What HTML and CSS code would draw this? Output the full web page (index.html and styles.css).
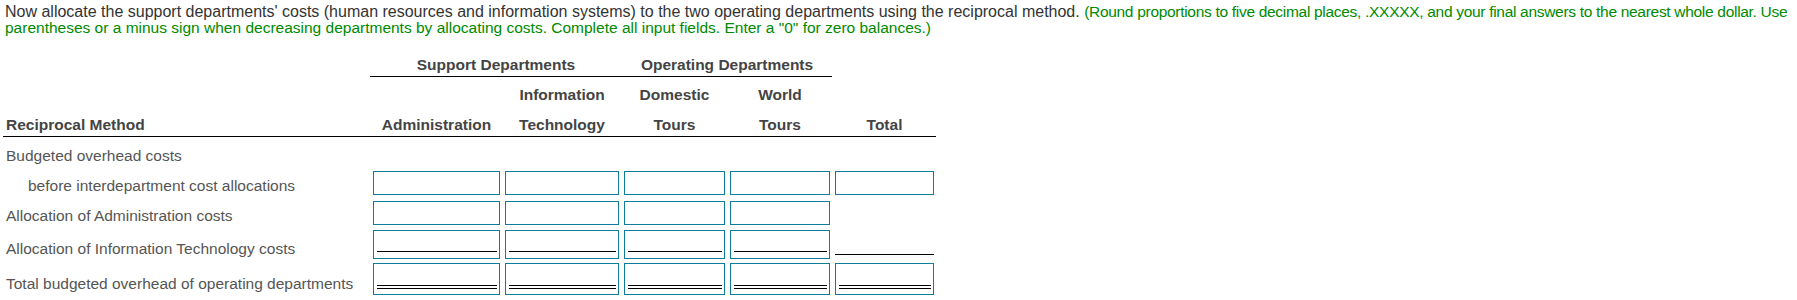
FILE: index.html
```html
<!DOCTYPE html>
<html lang="en">
<head>
<meta charset="utf-8">
<title>Reciprocal Method</title>
<link rel="stylesheet" href="styles.css">
</head>
<body>
<div class="page">
  <p class="intro">Now allocate the support departments' costs (human resources and information systems) to the two operating departments using the reciprocal method. <span class="hint tight">(Round proportions to five decimal places, .XXXXX, and your final answers to the nearest whole dollar. Use</span> <span class="hint">parentheses or a minus sign when decreasing departments by allocating costs. Complete all input fields. Enter a "0" for zero balances.)</span></p>

  <table class="alloc">
    <colgroup>
      <col class="c-label">
      <col class="c1">
      <col class="c2">
      <col class="c3">
      <col class="c4">
      <col class="c5">
    </colgroup>
    <thead>
      <tr class="h1">
        <th class="label"></th>
        <th class="group" colspan="2">Support Departments</th>
        <th class="group" colspan="2">Operating Departments</th>
        <th></th>
      </tr>
      <tr class="h2">
        <th class="label"></th>
        <th></th>
        <th>Information</th>
        <th>Domestic</th>
        <th>World</th>
        <th></th>
      </tr>
      <tr class="h3">
        <th class="label">Reciprocal Method</th>
        <th>Administration</th>
        <th>Technology</th>
        <th>Tours</th>
        <th>Tours</th>
        <th>Total</th>
      </tr>
    </thead>
    <tbody>
      <tr class="r-a">
        <td class="label">Budgeted overhead costs</td>
        <td></td><td></td><td></td><td></td><td></td>
      </tr>
      <tr class="r-b">
        <td class="label indent">before interdepartment cost allocations</td>
        <td><input class="amt" type="text" aria-label="Administration budgeted"></td>
        <td><input class="amt" type="text" aria-label="Information Technology budgeted"></td>
        <td><input class="amt" type="text" aria-label="Domestic Tours budgeted"></td>
        <td><input class="amt" type="text" aria-label="World Tours budgeted"></td>
        <td><input class="amt" type="text" aria-label="Total budgeted"></td>
      </tr>
      <tr class="r-c">
        <td class="label">Allocation of Administration costs</td>
        <td><input class="amt" type="text" aria-label="Administration allocation 1"></td>
        <td><input class="amt" type="text" aria-label="Information Technology allocation 1"></td>
        <td><input class="amt" type="text" aria-label="Domestic Tours allocation 1"></td>
        <td><input class="amt" type="text" aria-label="World Tours allocation 1"></td>
        <td></td>
      </tr>
      <tr class="r-d">
        <td class="label">Allocation of Information Technology costs</td>
        <td><input class="amt single" type="text" aria-label="Administration allocation 2"></td>
        <td><input class="amt single" type="text" aria-label="Information Technology allocation 2"></td>
        <td><input class="amt single" type="text" aria-label="Domestic Tours allocation 2"></td>
        <td><input class="amt single" type="text" aria-label="World Tours allocation 2"></td>
        <td><span class="rule"></span></td>
      </tr>
      <tr class="r-e">
        <td class="label">Total budgeted overhead of operating departments</td>
        <td><input class="amt double" type="text" aria-label="Administration total"></td>
        <td><input class="amt double" type="text" aria-label="Information Technology total"></td>
        <td><input class="amt double" type="text" aria-label="Domestic Tours total"></td>
        <td><input class="amt double" type="text" aria-label="World Tours total"></td>
        <td><input class="amt double" type="text" aria-label="Grand total"></td>
      </tr>
    </tbody>
  </table>
</div>
</body>
</html>
```

FILE: styles.css
```css
html, body {
  margin: 0;
  padding: 0;
  background: #ffffff;
}

body {
  font-family: "Liberation Sans", Arial, sans-serif;
  font-size: 15.5px;
  color: #333333;
}

.page {
  padding: 0 0 0 3px;
}

.intro {
  margin: 0;
  padding: 4px 0 0 2px;
  font-size: 16px;
  line-height: 16px;
  color: #333333;
}

.hint {
  color: #008a00;
  font-size: 15.5px;
}

.hint.tight {
  letter-spacing: -0.3px;
}

.alloc {
  margin-top: 10px;
  border-collapse: collapse;
  border-spacing: 0;
  table-layout: fixed;
  width: 933px;
}

.c-label { width: 367px; }
.c1 { width: 132px; }
.c2 { width: 119px; }
.c3 { width: 106px; }
.c4 { width: 105px; }
.c5 { width: 104px; }

.alloc th,
.alloc td {
  padding: 0 2px 0 3px;
  line-height: 16px;
  white-space: nowrap;
}

.alloc th {
  font-weight: bold;
  color: #444444;
  text-align: center;
  vertical-align: bottom;
  height: 30px;
  padding-bottom: 3px;
  box-sizing: border-box;
}

.alloc th.label {
  text-align: left;
}

.alloc th.group {
  border-bottom: 1px solid #000000;
}

.h3 th {
  border-bottom: 1px solid #000000;
}

.alloc td {
  vertical-align: top;
  color: #555555;
}

.alloc td.label {
  vertical-align: bottom;
  padding-bottom: 4px;
}

.alloc td.indent {
  padding-left: 25px;
}

.r-a td { height: 32px; box-sizing: border-box; }
.r-b td, .r-c td { padding-top: 3px; padding-bottom: 3px; }
.r-d td { padding-top: 2px; padding-bottom: 2px; }
.r-e td { padding-top: 2px; padding-bottom: 1px; }

.amt {
  display: block;
  box-sizing: border-box;
  width: 100%;
  height: 24px;
  margin: 0;
  padding: 0 4px;
  border: 1px solid #0f7c9a;
  border-radius: 0;
  background-color: #ffffff;
  font: inherit;
  outline: none;
}

.amt.single {
  height: 29px;
  background-image: linear-gradient(#000000, #000000);
  background-repeat: no-repeat;
  background-size: calc(100% - 5px) 1px;
  background-position: 3px calc(100% - 6px);
}

.amt.double {
  height: 32px;
  background-image: linear-gradient(#000000, #000000), linear-gradient(#000000, #000000);
  background-repeat: no-repeat, no-repeat;
  background-size: calc(100% - 5px) 1px, calc(100% - 5px) 1px;
  background-position: 3px calc(100% - 8px), 3px calc(100% - 5px);
}

.rule {
  display: block;
  height: 24px;
  border-bottom: 1px solid #000000;
}
```
